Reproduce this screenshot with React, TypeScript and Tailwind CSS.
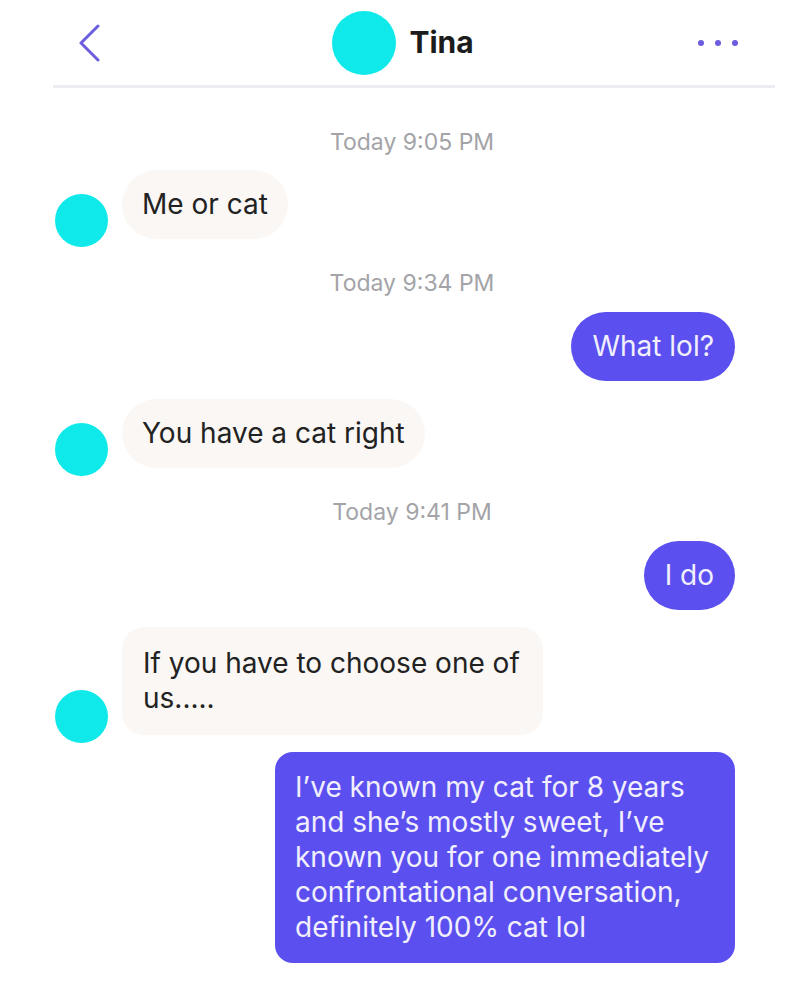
import { ReactNode } from 'react';

const font = { fontFamily: 'Inter, "Liberation Sans", sans-serif' };

function Avatar() {
  return <div className="w-[53px] h-[53px] shrink-0 rounded-full bg-[#10e9ea]" />;
}

function Stamp({ children }: { children: ReactNode }) {
  return (
    <div className="pl-[24px] text-center text-[23px] leading-[24px] text-[#a3a3a8]">{children}</div>
  );
}

function Theirs({ children, round = true }: { children: ReactNode; round?: boolean }) {
  return (
    <div className="flex items-end gap-[14px] pl-[55px]">
      <Avatar />
      <div
        className={
          'mb-[8px] bg-[#faf7f4] text-[#222] text-[28px] leading-[35px] ' +
          (round ? 'rounded-full px-[20px] py-[17px]' : 'rounded-[22px] px-[21px] py-[19px]')
        }
      >
        {children}
      </div>
    </div>
  );
}

function Mine({ children, round = true }: { children: ReactNode; round?: boolean }) {
  return (
    <div className="flex justify-end pr-[65px]">
      <div
        className={
          'bg-[#5b50ef] text-[#f1effd] text-[28px] leading-[35px] ' +
          (round ? 'rounded-full px-[21px] py-[17px]' : 'rounded-[18px] px-[20px] py-[18px]')
        }
      >
        {children}
      </div>
    </div>
  );
}

export default function App() {
  return (
    <div className="w-[800px] h-[1000px] bg-white overflow-hidden" style={font}>
      <header className="grid grid-cols-[1fr_auto_1fr] items-center h-[85px]">
        <div className="pl-[78px]">
          <svg width="24" height="38" viewBox="0 0 24 38" fill="none">
            <path d="M20 2 L3 19 L20 36" stroke="#6b5ce0" strokeWidth="3" strokeLinecap="round" strokeLinejoin="round" />
          </svg>
        </div>
        <div className="flex items-center gap-[13px] pl-[6px]">
          <div className="w-[64px] h-[64px] rounded-full bg-[#10e9ea]" />
          <span className="text-[30px] font-bold text-[#1c1c1c]">Tina</span>
        </div>
        <div className="flex justify-end gap-[11px] pr-[62px]">
          <span className="w-[6px] h-[6px] rounded-full bg-[#6b5ce0]" />
          <span className="w-[6px] h-[6px] rounded-full bg-[#6b5ce0]" />
          <span className="w-[6px] h-[6px] rounded-full bg-[#6b5ce0]" />
        </div>
      </header>
      <div className="ml-[53px] mr-[25px] h-[3px] bg-[#ececf1]" />

      <main className="flex flex-col">
        <div className="mt-[42px]">
          <Stamp>Today 9:05 PM</Stamp>
        </div>
        <div className="mt-[16px]">
          <Theirs>Me or cat</Theirs>
        </div>
        <div className="mt-[24px]">
          <Stamp>Today 9:34 PM</Stamp>
        </div>
        <div className="mt-[17px]">
          <Mine>What lol?</Mine>
        </div>
        <div className="mt-[18px]">
          <Theirs>You have a cat right</Theirs>
        </div>
        <div className="mt-[24px]">
          <Stamp>Today 9:41 PM</Stamp>
        </div>
        <div className="mt-[17px]">
          <Mine>I do</Mine>
        </div>
        <div className="mt-[17px]">
          <Theirs round={false}>
            <div className="w-[379px]">
              If you have to choose one of
              <br />
              us.....
            </div>
          </Theirs>
        </div>
        <div className="mt-[9px]">
          <Mine round={false}>
            <div className="w-[420px]">
              I’ve known my cat for 8 years
              <br />
              and she’s mostly sweet, I’ve
              <br />
              known you for one immediately
              <br />
              confrontational conversation,
              <br />
              definitely 100% cat lol
            </div>
          </Mine>
        </div>
      </main>
    </div>
  );
}
